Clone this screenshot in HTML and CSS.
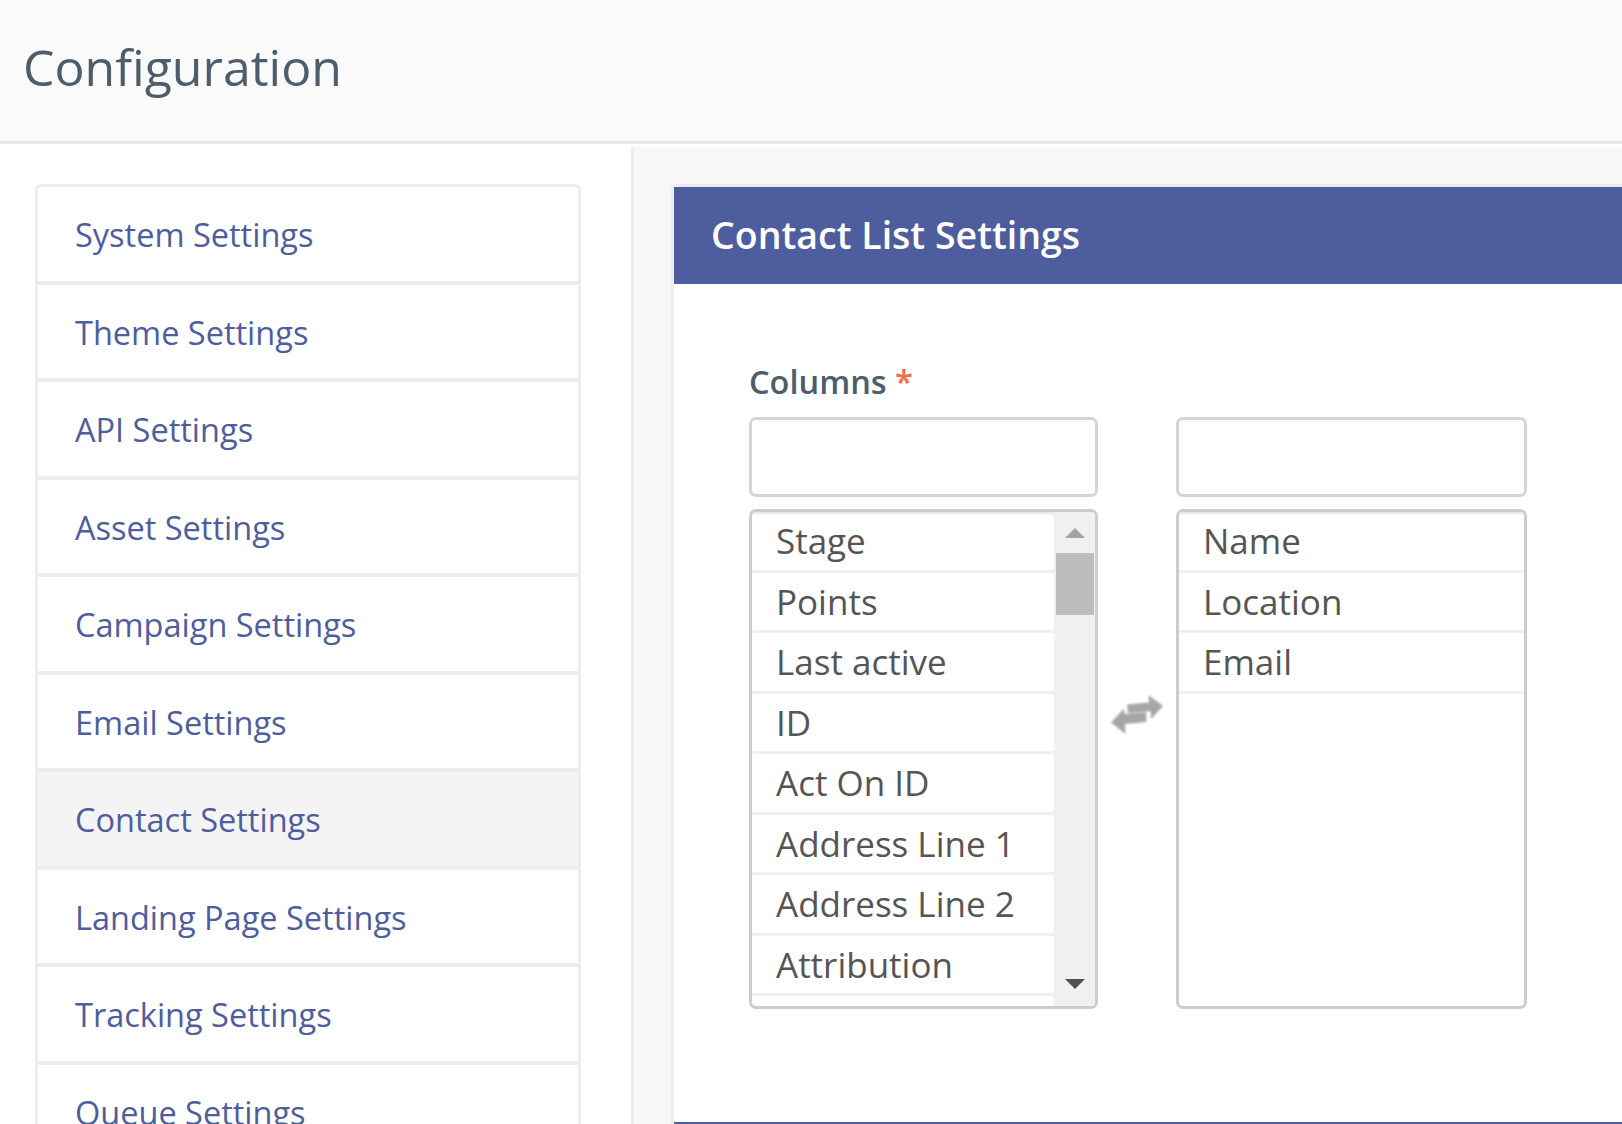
FILE: index.html
```html
<!DOCTYPE html>
<html lang="en">
<head>
  <meta charset="UTF-8" />
  <title>Configuration</title>
  <link rel="stylesheet" href="styles.css">
</head>
<body>
  <header class="page-header">
    <h1>Configuration</h1>
  </header>

  <div class="layout">
    <aside class="sidebar">
      <nav class="settings-list">
        <a class="settings-item" href="#">System Settings</a>
        <a class="settings-item" href="#">Theme Settings</a>
        <a class="settings-item" href="#">API Settings</a>
        <a class="settings-item" href="#">Asset Settings</a>
        <a class="settings-item" href="#">Campaign Settings</a>
        <a class="settings-item" href="#">Email Settings</a>
        <a class="settings-item active" href="#">Contact Settings</a>
        <a class="settings-item" href="#">Landing Page Settings</a>
        <a class="settings-item" href="#">Tracking Settings</a>
        <a class="settings-item" href="#">Queue Settings</a>
      </nav>
    </aside>

    <main class="content">
      <section class="panel">
        <h2 class="panel-title">Contact List Settings</h2>
        <div class="panel-body">
          <label class="field-label">Columns <span class="required">*</span></label>

          <div class="picker">
            <div class="picker-col">
              <input class="picker-search" type="text" />
              <div class="picker-box">
                <ul class="picker-list">
                  <li>Stage</li>
                  <li>Points</li>
                  <li>Last active</li>
                  <li>ID</li>
                  <li>Act On ID</li>
                  <li>Address Line 1</li>
                  <li>Address Line 2</li>
                  <li>Attribution</li>
                  <li></li>
                </ul>
                <div class="scrollbar">
                  <span class="scroll-up"></span>
                  <span class="scroll-thumb"></span>
                  <span class="scroll-down"></span>
                </div>
              </div>
            </div>

            <div class="picker-swap">
              <svg class="swap-icon" width="54" height="42" viewBox="0 0 54 42">
                <path d="M17 10.5 L39 8.5 L38.5 1 L53 12 L41 25 L40.5 17 L18 19 Z" />
                <path d="M36 18 L36.5 28 L15 30 L15.5 40 L1 28.5 L14 14.5 L14.5 20 Z" />
              </svg>
            </div>

            <div class="picker-col picker-col-right">
              <input class="picker-search" type="text" />
              <div class="picker-box">
                <ul class="picker-list">
                  <li>Name</li>
                  <li>Location</li>
                  <li>Email</li>
                </ul>
              </div>
            </div>
          </div>
        </div>
        <div class="panel-next"></div>
      </section>
    </main>
  </div>
</body>
</html>
```

FILE: styles.css
```css
* {
  box-sizing: border-box;
}

html, body {
  height: 1124px;
  overflow: hidden;
}

body {
  margin: 0;
  font-family: "Open Sans", "Liberation Sans", sans-serif;
  background: #fff;
}

.page-header {
  height: 144px;
  padding-left: 23px;
  background: #fafafa;
  border-bottom: 3px solid #e7e8ea;
}

.page-header h1 {
  margin: 0;
  padding-top: 34px;
  font-size: 50px;
  line-height: 66px;
  font-weight: 400;
  color: #4e5d6c;
}

.layout {
  display: flex;
  height: 977px;
  margin-top: 3px;
}

.sidebar {
  flex: 0 0 634px;
  padding: 37px 50px 0 35px;
  background: #fff;
  border-right: 3px solid #ebedf0;
  overflow: hidden;
}

.settings-list {
  display: flex;
  flex-direction: column;
  border: 3px solid #ebedf0;
  border-bottom: none;
  border-radius: 6px 6px 0 0;
}

.settings-item {
  display: flex;
  align-items: center;
  flex: 0 0 auto;
  height: 97.5px;
  padding: 1.5px 0 0 37px;
  font-size: 32.5px;
  color: #4e5d9d;
  text-decoration: none;
  border-bottom: 4px solid #ebedf0;
}

.settings-item.active {
  background: #f4f4f4;
}

.content {
  flex: 1;
  min-width: 0;
  padding: 37px 0 0 37px;
  background: #f7f7f8;
  overflow: hidden;
}

.panel {
  width: 1100px;
  height: 940px;
  display: flex;
  flex-direction: column;
  background: #fff;
  border: 3px solid #ebedf0;
  border-bottom: none;
  border-radius: 6px 0 0 0;
}

.panel-title {
  margin: 0;
  height: 97px;
  padding-left: 37px;
  background: #4e5d9d;
  color: #fff;
  font-size: 37.5px;
  line-height: 96px;
  font-weight: 600;
}

.panel-body {
  flex: 1;
  padding: 76px 75px 0;
}

.panel-next {
  height: 2px;
  background: #4e5d9d;
}

.field-label {
  display: block;
  font-size: 32.5px;
  line-height: 44px;
  font-weight: 600;
  color: #4e5d6c;
}

.required {
  color: #f86b4f;
}

.picker {
  display: flex;
  margin-top: 13px;
}

.picker-col {
  flex: 0 0 349px;
  display: flex;
  flex-direction: column;
  gap: 12px;
}

.picker-col-right {
  flex-basis: 351px;
}

.picker-swap {
  flex: 0 0 78px;
  display: flex;
  justify-content: center;
  padding-top: 277px;
}

.swap-icon {
  display: block;
  fill: #a6a6a6;
  filter: blur(0.8px);
}

.picker-search {
  display: block;
  width: 100%;
  height: 80px;
  border: 3px solid #d5d5d5;
  border-radius: 7px;
  background: #fff;
}

.picker-box {
  display: flex;
  height: 500px;
  overflow: hidden;
  border: 3px solid #cccccc;
  border-radius: 7px;
  background: #fff;
}

.picker-list {
  flex: 1;
  min-width: 0;
  margin: 0;
  padding: 0;
  list-style: none;
  overflow: hidden;
  box-shadow: inset 0 3px 3px -1px #e4e4e4;
}

.picker-list li {
  height: 60.5px;
  padding-left: 24px;
  font-size: 35px;
  line-height: 58px;
  color: #555;
  border-bottom: 3px solid #f0f0f0;
}

.scrollbar {
  position: relative;
  flex: 0 0 41px;
  background: #f0f0f0;
}

.scroll-up,
.scroll-down,
.scroll-thumb {
  position: absolute;
}

.scroll-up {
  top: 16px;
  left: 11px;
  border-left: 10px solid transparent;
  border-right: 10px solid transparent;
  border-bottom: 10px solid #a3a3a3;
}

.scroll-thumb {
  top: 41px;
  left: 2px;
  width: 38px;
  height: 62px;
  background: #bdbdbd;
}

.scroll-down {
  bottom: 17px;
  left: 11px;
  border-left: 10px solid transparent;
  border-right: 10px solid transparent;
  border-top: 10px solid #505050;
}
```
